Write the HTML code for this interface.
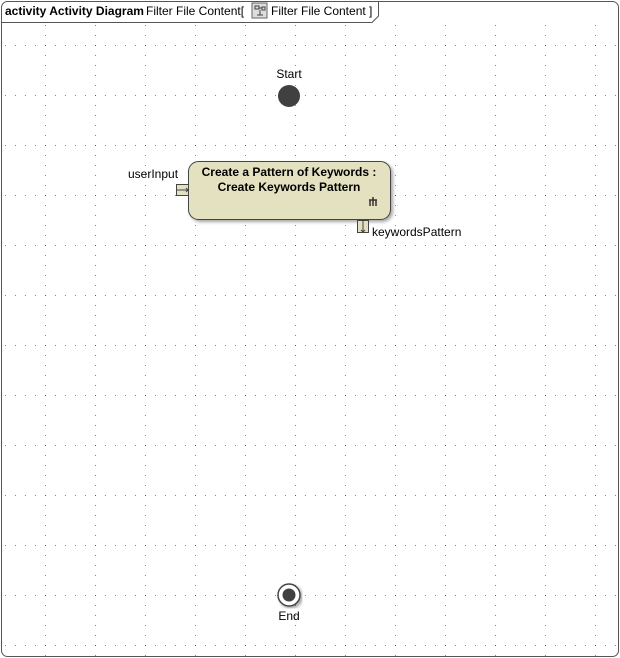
<!DOCTYPE html>
<html><head><style>
body{margin:0;width:620px;height:658px;background:#fff;overflow:hidden;font-family:"Liberation Sans",sans-serif;}
</style></head><body>
<svg width="620" height="658" xmlns="http://www.w3.org/2000/svg" style="position:absolute;left:0;top:0">
<defs>
<pattern id="g" x="5" y="5" width="50" height="50" patternUnits="userSpaceOnUse">
<rect x="40" y="0" width="1" height="1" fill="#888"/><rect x="40" y="10" width="1" height="1" fill="#888"/><rect x="40" y="20" width="1" height="1" fill="#888"/><rect x="40" y="30" width="1" height="1" fill="#888"/><rect x="40" y="50" width="1" height="1" fill="#888"/>
<rect x="0" y="40" width="1" height="1" fill="#888"/><rect x="10" y="40" width="1" height="1" fill="#888"/><rect x="20" y="40" width="1" height="1" fill="#888"/><rect x="30" y="40" width="1" height="1" fill="#888"/><rect x="40" y="40" width="1" height="1" fill="#555"/>
</pattern>
<filter id="s"><feDropShadow dx="2" dy="2" stdDeviation="1.5" flood-color="#000" flood-opacity="0.35"/></filter>
</defs>
<rect x="2" y="22" width="616" height="634" fill="url(#g)"/>
<rect x="1.5" y="1.5" width="617" height="655" rx="6" fill="none" stroke="#555"/>
<path d="M1.5 22.5 H372 L378.5 16 V1.5" fill="none" stroke="#555"/>
<text x="5" y="15" font-size="12" font-weight="bold" fill="#000">activity Activity Diagram</text>
<text x="146" y="15" font-size="12" fill="#000">Filter File Content[</text>
<rect x="252" y="3" width="15" height="15" fill="#ddd" stroke="#666"/>
<path d="M255 6h4v3h-4zM262 7h3v3h-3zM259 8h3M260 10v5M257 15h6" stroke="#444" fill="none"/>
<text x="271" y="15" font-size="12" fill="#000">Filter File Content ]</text>
<text x="289" y="78" font-size="12" text-anchor="middle">Start</text>
<circle cx="289" cy="96" r="11" fill="#404040"/>
<rect x="188.5" y="161.5" width="202" height="58" rx="10" fill="#e3e1c0" stroke="#444" filter="url(#s)"/>
<text x="289" y="176" font-size="12" font-weight="bold" text-anchor="middle">Create a Pattern of Keywords :</text>
<text x="289" y="191" font-size="12" font-weight="bold" text-anchor="middle">Create Keywords Pattern</text>
<path d="M373 197v9M369 200h8M370 200v6M376 200v6" stroke="#333" stroke-width="1.5" fill="none"/>
<rect x="176.5" y="184.5" width="12" height="11" fill="#e3e1c0" stroke="#444"/>
<path d="M176 190h12M186 188l2 2-2 2" stroke="#444" fill="none"/>
<text x="128" y="178" font-size="12">userInput</text>
<rect x="357.5" y="220.5" width="11" height="12" fill="#e3e1c0" stroke="#444"/>
<path d="M363 220v12M361 230l2 2 2-2" stroke="#444" fill="none"/>
<text x="372" y="236" font-size="12">keywordsPattern</text>
<circle cx="289" cy="595" r="11" fill="#fff" stroke="#444" stroke-width="1.5" filter="url(#s)"/>
<circle cx="289" cy="595" r="6.5" fill="#404040"/>
<text x="289" y="620" font-size="12" text-anchor="middle">End</text>
</svg>
</body></html>
